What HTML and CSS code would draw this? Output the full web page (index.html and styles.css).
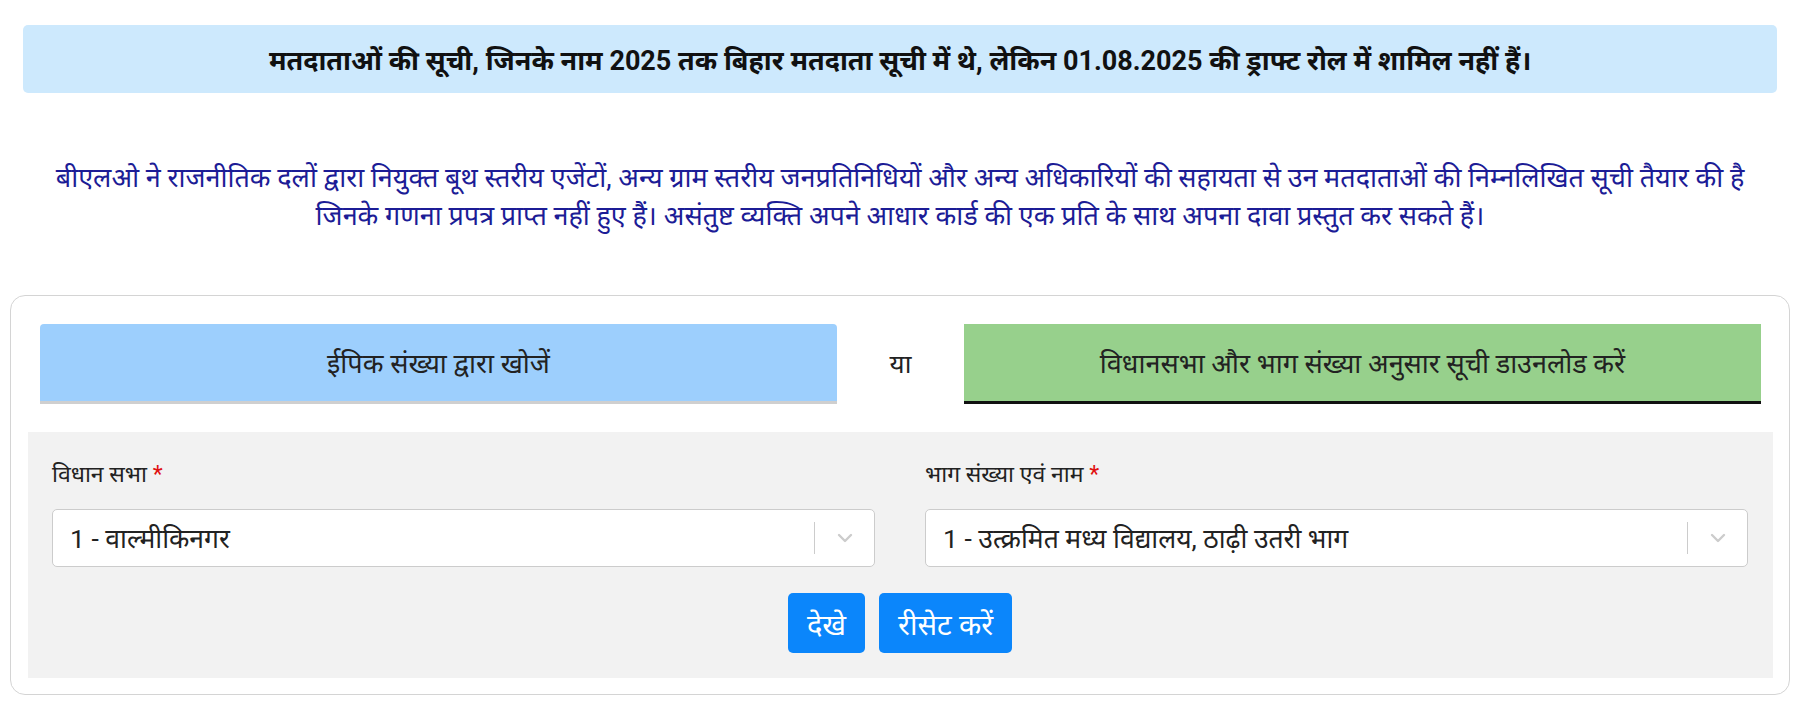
FILE: index.html
```html
<!DOCTYPE html>
<html lang="hi">
<head>
<meta charset="utf-8">
<title>मतदाता सूची</title>
<link rel="stylesheet" href="styles.css">
</head>
<body>
<div class="page">
  <div class="banner">मतदाताओं की सूची, जिनके नाम 2025 तक बिहार मतदाता सूची में थे, लेकिन 01.08.2025 की ड्राफ्ट रोल में शामिल नहीं हैं।</div>
  <p class="intro">बीएलओ ने राजनीतिक दलों द्वारा नियुक्त बूथ स्तरीय एजेंटों, अन्य ग्राम स्तरीय जनप्रतिनिधियों और अन्य अधिकारियों की सहायता से उन मतदाताओं की निम्नलिखित सूची तैयार की है<br>जिनके गणना प्रपत्र प्राप्त नहीं हुए हैं। असंतुष्ट व्यक्ति अपने आधार कार्ड की एक प्रति के साथ अपना दावा प्रस्तुत कर सकते हैं।</p>
  <div class="card">
    <div class="tabs">
      <div class="tab tab-epic">ईपिक संख्या द्वारा खोजें</div>
      <div class="or">या</div>
      <div class="tab tab-list">विधानसभा और भाग संख्या अनुसार सूची डाउनलोड करें</div>
    </div>
    <div class="panel">
      <div class="fields">
        <div class="field">
          <label class="label">विधान सभा <span class="req">*</span></label>
          <div class="select">
            <span class="value">1 - वाल्मीकिनगर</span>
            <span class="sep"></span>
            <span class="arrow"><svg width="16" height="10" viewBox="0 0 16 10"><path d="M2 2l6 6 6-6" fill="none" stroke="#cccccc" stroke-width="2.4" stroke-linecap="round" stroke-linejoin="round"/></svg></span>
          </div>
        </div>
        <div class="field">
          <label class="label">भाग संख्या एवं नाम <span class="req">*</span></label>
          <div class="select">
            <span class="value">1 - उत्क्रमित मध्य विद्यालय, ठाढ़ी उतरी भाग</span>
            <span class="sep"></span>
            <span class="arrow"><svg width="16" height="10" viewBox="0 0 16 10"><path d="M2 2l6 6 6-6" fill="none" stroke="#cccccc" stroke-width="2.4" stroke-linecap="round" stroke-linejoin="round"/></svg></span>
          </div>
        </div>
      </div>
      <div class="actions">
        <button class="btn">देखे</button>
        <button class="btn">रीसेट करें</button>
      </div>
    </div>
  </div>
</div>
</body>
</html>
```
FILE: styles.css
```css
html, body {
  margin: 0;
  padding: 0;
  background: #ffffff;
}
body {
  font-family: Roboto, "Noto Sans", "Noto Sans Devanagari", sans-serif;
  color: #212529;
}
.page {
  padding: 25px 10px 0;
}
.banner {
  margin: 0 13px;
  height: 68px;
  display: flex;
  align-items: center;
  justify-content: center;
  background: #cde9fd;
  border-radius: 5px;
  font-size: 27px;
  font-weight: 700;
  color: #111111;
}
.intro {
  margin: 66px 0 0;
  text-align: center;
  font-size: 27px;
  line-height: 38px;
  color: #1c1c96;
}
.card {
  margin-top: 60px;
  border: 1px solid #d4d4d4;
  border-radius: 15px;
  padding: 28px 16px 16px 17px;
  height: 400px;
  box-sizing: border-box;
}
.tabs {
  display: flex;
  align-items: flex-start;
  padding: 0 12px 0 12px;
}
.tab {
  flex: 1;
  height: 77px;
  display: flex;
  align-items: center;
  justify-content: center;
  font-size: 27px;
  color: #222222;
}
.tab-epic {
  background: #9dcffd;
  border-radius: 4px 4px 0 0;
  box-shadow: 0 3px 0 #cfcfcf;
}
.tab-list {
  background: #97d08c;
  border-bottom: 3px solid #111111;
}
.or {
  width: 127px;
  height: 77px;
  display: flex;
  align-items: center;
  justify-content: center;
  font-size: 26px;
  color: #222222;
}
.panel {
  margin-top: 28px;
  background: #f2f2f2;
  padding: 28px 25px 25px 24px;
  height: 246px;
  box-sizing: border-box;
}
.fields {
  display: grid;
  grid-template-columns: 1fr 1fr;
  column-gap: 50px;
}
.label {
  display: block;
  font-size: 23px;
  line-height: 30px;
  color: #222222;
  margin-bottom: 19px;
}
.req {
  color: #e01010;
}
.select {
  height: 58px;
  box-sizing: border-box;
  background: #ffffff;
  border: 1px solid #cccccc;
  border-radius: 5px;
  display: flex;
  align-items: center;
  padding-left: 17px;
}
.value {
  flex: 1;
  font-size: 26.5px;
  color: #222222;
}
.sep {
  width: 1px;
  height: 32px;
  background: #cccccc;
}
.arrow {
  width: 59px;
  display: flex;
  justify-content: center;
  align-items: center;
}
.actions {
  display: flex;
  justify-content: center;
  gap: 14px;
  margin-top: 26px;
}
.btn {
  height: 60px;
  padding: 0 19px;
  border: none;
  border-radius: 5px;
  background: #0b86fb;
  color: #ffffff;
  font-family: inherit;
  font-size: 29px;
}
```
